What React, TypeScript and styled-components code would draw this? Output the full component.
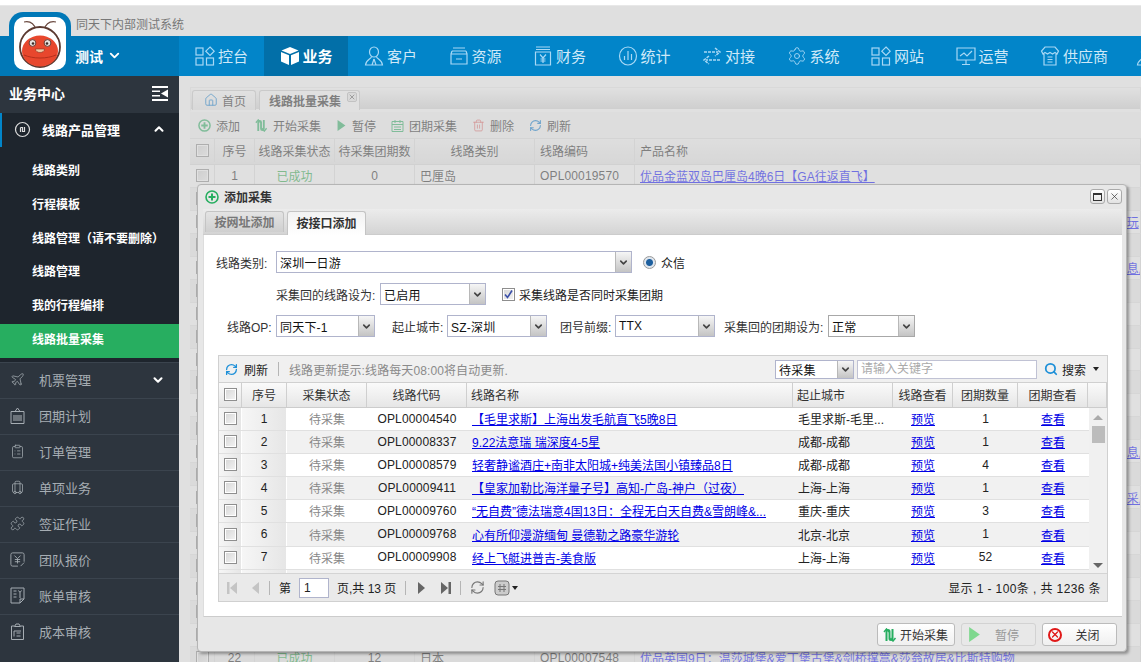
import React from 'react';
import styled, { createGlobalStyle } from 'styled-components';
import {
  ChevronDown, ChevronUp, ClipboardList, Home, Luggage, Plane, Puzzle, RefreshCw,
  Search, Settings, Trash2, X,
} from 'lucide-react';

const GlobalStyle = createGlobalStyle`
  html, body {
    margin: 0;
    padding: 0;
    overflow: hidden;
  }
  body {
    font-family: "Liberation Sans", "Noto Sans CJK SC", sans-serif;
    font-size: 12px;
    color: #222;
  }
  * {
    box-sizing: border-box;
  }
`;

const Page = styled.div`
  position: relative;
  width: 1141px;
  height: 662px;
  overflow: hidden;
  background: #fff;
  padding-top: 5px;
  display: flex;
  flex-direction: column;
`;

const TopStrip = styled.div`
  height: 31px;
  background: #dfdfdf;
  border-top: 1px solid #e8e8e8;
  padding: 11px 0 0 76px;
  line-height: 16px;
  color: #777;
  flex: none;
`;

const LogoFrame = styled.div`
  position: absolute;
  left: 9px;
  top: 12px;
  width: 62px;
  height: 64px;
  padding: 5px 5px 0;
  background: #0078b7;
  border-radius: 14px 14px 0 0;
`;

const LogoPlate = styled.div`
  width: 52px;
  height: 53px;
  background: #fff;
  border-radius: 10px;
  overflow: hidden;
`;

const NavBar = styled.nav`
  height: 40px;
  flex: none;
  display: flex;
  background: #0285c9;
  overflow: hidden;
`;

const Brand = styled.div`
  width: 179px;
  flex: none;
  background: #0078b7;
  color: #fff;
  font-size: 14px;
  font-weight: 700;
  padding: 0 0 1px 75px;
  display: flex;
  align-items: center;
  gap: 4px;
`;

const NavItem = styled.div<{ $active?: boolean; $w?: number }>`
  flex: none;
  width: ${(p) => p.$w ?? 84.5}px;
  padding: 0 0 1px 16px;
  display: flex;
  align-items: center;
  gap: 3px;
  font-size: 15px;
  color: ${(p) => (p.$active ? '#fff' : '#cfe9f8')};
  font-weight: ${(p) => (p.$active ? 700 : 400)};
  background: ${(p) => (p.$active ? '#026fa8' : 'transparent')};
  white-space: nowrap;
`;

const Body = styled.div`
  flex: 1;
  min-height: 0;
  display: flex;
`;

const Sidebar = styled.aside`
  width: 179px;
  flex: none;
  background: #2d353e;
  color: #fff;
`;

const SideTitle = styled.div`
  height: 37px;
  padding: 0 11px 3px 9px;
  display: flex;
  align-items: center;
  justify-content: space-between;
  font-size: 14px;
  font-weight: 700;
`;

const GroupHead = styled.div`
  height: 34px;
  background: #1e252d;
  border-left: 2px solid #0285c9;
  padding: 0 13px 2px 12px;
  display: flex;
  align-items: center;
  gap: 11px;
  font-size: 13px;
  font-weight: 700;
  span {
    flex: 1;
  }
`;

const SubList = styled.div`
  background: #1e252d;
  padding: 8px 0 4px;
`;

const SubItem = styled.div<{ $active?: boolean }>`
  height: 33.8px;
  line-height: 33.8px;
  padding-left: 32px;
  font-weight: 700;
  background: ${(p) => (p.$active ? '#27ae60' : 'transparent')};
`;

const SideRow = styled.div`
  height: 36px;
  padding: 0 14px 1px 10px;
  border-top: 1px solid #3b444e;
  display: flex;
  align-items: center;
  gap: 14px;
  font-size: 13px;
  color: #a6adb3;
  svg:first-child {
    flex: none;
    width: 15px;
    height: 17px;
  }
  span {
    flex: 1;
  }
`;

const Content = styled.main`
  position: relative;
  flex: 1;
  min-width: 0;
  padding: 11px 0 0 11px;
  background: #fff;
  overflow: hidden;
`;

const TabBar = styled.div`
  height: 25px;
  display: flex;
  gap: 3px;
  padding: 2px 0 0 1px;
  background: linear-gradient(#fff, #d8d8d8);
  border: 1px solid #eee;
  border-bottom: 3px solid #fff;
`;

const PageTab = styled.div<{ $active?: boolean }>`
  height: 20px;
  padding: 0 ${(p) => (p.$active ? 18 : 9)}px 1px ${(p) => (p.$active ? 9 : 11)}px;
  position: relative;
  display: flex;
  align-items: center;
  gap: 4px;
  border: 1px solid #ccc;
  border-bottom: 0;
  border-radius: 3px 3px 0 0;
  background: ${(p) => (p.$active ? '#fff' : 'linear-gradient(#fff, #eee)')};
  font-weight: ${(p) => (p.$active ? 700 : 400)};
  color: #222;
`;

const TabClose = styled.i`
  position: absolute;
  right: 2px;
  top: 1px;
  width: 10px;
  height: 10px;
  border: 1px solid #bbb;
  border-radius: 2px;
  background: #eee;
  color: #666;
  display: flex;
  align-items: center;
  justify-content: center;
`;

const PageToolbar = styled.div`
  height: 27px;
  display: flex;
  align-items: center;
  padding-left: 8px;
  gap: 15px;
  background: #f8f8f8;
  border-bottom: 1px solid #e4e4e4;
`;

const ToolButton = styled.span<{ $tone?: string }>`
  display: flex;
  align-items: center;
  gap: 5px;
  color: ${(p) => p.$tone ?? '#222'};
`;

const listCols = '25px 40px 80px 80px 120px 100px 1fr';

const ListHead = styled.div`
  height: 26px;
  padding-bottom: 2px;
  display: grid;
  grid-template-columns: ${listCols};
  background: linear-gradient(#fafafa, #eaeaea);
  border-bottom: 1px solid #ddd;
`;

const ListRow = styled.div<{ $odd?: boolean }>`
  height: 22.95px;
  display: grid;
  grid-template-columns: ${listCols};
  align-items: center;
  background: ${(p) => (p.$odd ? '#f1f1f1' : '#fff')};
  border-bottom: 1px solid #e8e8e8;
`;

const ListCell = styled.div<{ $center?: boolean; $tone?: string }>`
  height: 100%;
  min-width: 0;
  display: flex;
  align-items: center;
  justify-content: ${(p) => (p.$center ? 'center' : 'flex-start')};
  padding-left: ${(p) => (p.$center ? 0 : 5)}px;
  color: ${(p) => p.$tone ?? '#222'};
  white-space: nowrap;
  overflow: hidden;
  border-right: 1px solid #e2e2e2;
`;

const Mask = styled.div`
  position: absolute;
  inset: 0;
  background: rgba(200, 200, 200, 0.56);
`;

const Modal = styled.section`
  position: absolute;
  left: 18px;
  top: 108px;
  width: 930px;
  height: 468px;
  background: #e7e7e7;
  border: 1px solid #b5b5b5;
  border-radius: 4px;
  box-shadow: 2px 2px 3px rgba(0, 0, 0, 0.35);
  padding: 0 4px 0 5px;
  display: flex;
  flex-direction: column;
`;

const ModalTitle = styled.header`
  height: 24px;
  flex: none;
  display: flex;
  align-items: center;
  gap: 5px;
  padding: 0 0 1px 2px;
  font-weight: 700;
  color: #333;
`;

const WinButtons = styled.div`
  margin-left: auto;
  display: flex;
  gap: 2px;
`;

const WinButton = styled.button`
  width: 15px;
  height: 15px;
  padding: 0;
  border: 1px solid #aaa;
  border-radius: 3px;
  background: linear-gradient(#fff, #e2e2e2);
  color: #333;
  display: flex;
  align-items: center;
  justify-content: center;
`;

const MaxGlyph = styled.i`
  width: 9px;
  height: 8px;
  border: 1px solid #333;
  border-top-width: 2px;
`;

const ModalTabs = styled.div`
  height: 26px;
  flex: none;
  display: flex;
  align-items: flex-end;
  gap: 3px;
  padding-left: 2px;
  background: linear-gradient(#ececec, #d4d4d4);
  border-bottom: 1px solid #ccc;
`;

const ModalTab = styled.div<{ $active?: boolean }>`
  height: ${(p) => (p.$active ? 24 : 21)}px;
  margin-bottom: ${(p) => (p.$active ? -1 : 2)}px;
  width: 79px;
  padding-bottom: 2px;
  display: flex;
  align-items: center;
  justify-content: center;
  border: 1px solid #c4c4c4;
  border-bottom: 0;
  border-radius: 3px 3px 0 0;
  background: ${(p) => (p.$active ? 'linear-gradient(#f2f2f2, #fff)' : 'linear-gradient(#e4e4e4, #cfcfcf)')};
  color: ${(p) => (p.$active ? '#333' : '#777')};
  font-weight: 700;
`;

const Panel = styled.div`
  height: 382px;
  flex: none;
  background: #fff;
  border-left: 1px solid #ddd;
  border-bottom: 1px solid #ccc;
  padding-top: 16px;
`;

const FormRow = styled.div<{ $indent: number }>`
  height: 22px;
  margin-bottom: 10px;
  padding-left: ${(p) => p.$indent}px;
  display: flex;
  align-items: center;
`;

const FieldLabel = styled.label<{ $w: number; $gap?: number }>`
  width: ${(p) => p.$w}px;
  margin-left: ${(p) => p.$gap ?? 0}px;
  flex: none;
  color: #333;
  white-space: nowrap;
`;

const Combo = styled.div<{ $w: number; $plain?: boolean; $short?: boolean }>`
  width: ${(p) => p.$w}px;
  height: ${(p) => (p.$short ? 19 : 22)}px;
  flex: none;
  display: flex;
  border: 1px solid ${(p) => (p.$plain ? '#a8a8a8' : '#b0b4cc')};
  background: #fff;
`;

const ComboText = styled.span`
  flex: 1;
  padding-left: 3px;
  display: flex;
  align-items: center;
  color: #111;
  letter-spacing: 0.2px;
`;

const ComboTrigger = styled.span`
  width: 16px;
  flex: none;
  display: flex;
  align-items: center;
  justify-content: center;
  background: linear-gradient(#f6f6f6, #c4c4c4);
  border-left: 1px solid #b8b8b8;
  color: #444;
`;

const Radio = styled.i`
  width: 13px;
  height: 13px;
  margin: 0 5px 0 11px;
  border-radius: 50%;
  border: 1px solid #999;
  background: radial-gradient(circle, #1d5f9e 0 3px, #dfe6ee 4px);
`;

const CheckBox = styled.i`
  width: 13px;
  height: 13px;
  flex: none;
  display: flex;
  align-items: center;
  justify-content: center;
  border: 1px solid #8e8e8e;
  outline: 1px solid #fff;
  outline-offset: -2px;
  background: linear-gradient(135deg, #d6d6d6, #f4f4f4);
`;

const FormCheck = styled(CheckBox)`
  margin: 0 4px 0 16px;
`;

const Grid = styled.div`
  margin: 18px 0 0 14px;
  width: 890px;
  height: 247px;
  border: 1px solid #d0d0d0;
  display: flex;
  flex-direction: column;
`;

const GridBar = styled.div`
  height: 27px;
  flex: none;
  display: flex;
  align-items: center;
  padding: 0 8px 0 6px;
  background: #f0f0f0;
  border-bottom: 1px solid #d0d0d0;
`;

const RefreshLabel = styled.span`
  margin-left: 6px;
`;

const BarDivider = styled.i<{ $m?: number }>`
  width: 1px;
  height: 14px;
  margin: 0 ${(p) => p.$m ?? 9}px;
  flex: none;
  background: #b5b5b5;
`;

const Hint = styled.span`
  color: #8a8a8a;
  letter-spacing: 0.1px;
`;

const BarRight = styled.div`
  margin-left: auto;
  display: flex;
  align-items: center;
`;

const SearchInput = styled.div`
  width: 180px;
  height: 19px;
  margin: 0 7px 0 3px;
  padding-left: 3px;
  line-height: 17px;
  color: #aaa;
  background: #fff;
  border: 1px solid #c0c2d4;
`;

const SearchLabel = styled.span`
  margin: 0 7px 0 4px;
`;

const Caret = styled.i`
  width: 0;
  height: 0;
  border: 3px solid transparent;
  border-top: 4px solid #222;
  border-bottom: 0;
`;

const gridCols = '23px 45px 80px 100px 326px 100px 60px 65px 70px 19px';

const GridHead = styled.div`
  height: 25px;
  flex: none;
  padding-bottom: 0;
  display: grid;
  grid-template-columns: ${gridCols};
  background: linear-gradient(#fafafa, #e6e6e6);
  border-bottom: 1px solid #ccc;
`;

const HeadCell = styled.div<{ $left?: boolean }>`
  display: flex;
  align-items: center;
  justify-content: ${(p) => (p.$left ? 'flex-start' : 'center')};
  padding: 0 0 2px ${(p) => (p.$left ? 4 : 0)}px;
  color: #333;
  border-right: 1px solid #cfcfcf;
`;

const GridBody = styled.div`
  flex: 1;
  min-height: 0;
  display: flex;
  overflow: hidden;
`;

const Rows = styled.div`
  flex: 1;
  overflow: hidden;
`;

const GridRow = styled.div<{ $odd?: boolean }>`
  height: 23.1px;
  display: grid;
  grid-template-columns: 23px 45px 80px 100px 326px 100px 60px 65px 70px;
  background: ${(p) => (p.$odd ? '#f1f1f1' : '#fff')};
  border-bottom: 1px solid #e0e0e0;
`;

const Cell = styled.div<{ $left?: boolean; $tone?: string; $shade?: boolean }>`
  display: flex;
  align-items: center;
  justify-content: ${(p) => (p.$left ? 'flex-start' : 'center')};
  padding: 0 0 1px ${(p) => (p.$left ? 5 : 0)}px;
  color: ${(p) => p.$tone ?? '#222'};
  white-space: nowrap;
  overflow: hidden;
  background: ${(p) => (p.$shade ? 'linear-gradient(90deg, #f6f6f6, #e6e6e6)' : 'transparent')};
  border-right: ${(p) => (p.$shade ? '1px solid #fff' : '0')};
`;

const Mono = styled.span`
  letter-spacing: 0.15px;
`;

const LinkText = styled.a`
  color: #0000e6;
  text-decoration: underline;
`;

const MutedLink = styled.a`
  color: #0000ff;
  text-decoration: underline;
`;

const Scroll = styled.div`
  width: 18px;
  flex: none;
  background: #f0f0f0;
  padding: 7px 2px 5px;
  display: flex;
  flex-direction: column;
  align-items: center;
`;

const ScrollThumb = styled.i`
  width: 13px;
  height: 17px;
  margin-top: 6px;
  background: #bcbcbc;
`;

const ArrowUp = styled.i`
  width: 0;
  height: 0;
  border: 5px solid transparent;
  border-bottom: 5px solid #aaa;
  border-top: 0;
`;

const ArrowDown = styled.i`
  width: 0;
  height: 0;
  margin-top: auto;
  border: 5px solid transparent;
  border-top: 5px solid #666;
  border-bottom: 0;
`;

const Pager = styled.div`
  height: 28px;
  flex: none;
  display: flex;
  align-items: center;
  padding: 0 6px 0 8px;
  background: #eaeaea;
  border-top: 1px solid #d4d4d4;
  color: #222;
`;

const PagerIcon = styled.span<{ $gap?: number }>`
  display: flex;
  margin-left: ${(p) => p.$gap ?? 0}px;
`;

const PageInput = styled.div`
  width: 30px;
  height: 20px;
  margin: 0 8px;
  padding-left: 4px;
  line-height: 18px;
  background: #fff;
  border: 1px solid #b0b4cc;
`;

const PagerInfo = styled.span`
  margin-left: auto;
  letter-spacing: 0.4px;
`;

const ModalFoot = styled.footer`
  flex: 1;
  display: flex;
  justify-content: flex-end;
  gap: 6px;
  padding: 6px 5px 0 0;
`;

const FootButton = styled.button<{ $w: number; $off?: boolean }>`
  width: ${(p) => p.$w}px;
  height: 23px;
  padding: 0 3px 0 5px;
  display: flex;
  align-items: center;
  font: inherit;
  color: ${(p) => (p.$off ? '#999' : '#333')};
  border: 1px solid ${(p) => (p.$off ? '#d2d2d2' : '#bbb')};
  border-radius: 3px;
  background: ${(p) => (p.$off ? '#e8e8e8' : 'linear-gradient(#fff, #f0f0f0)')};
  span {
    flex: 1;
    text-align: center;
  }
`;

const CloseMark = styled.i`
  width: 14px;
  height: 14px;
  border: 2px solid #e01818;
  border-radius: 50%;
  color: #e01818;
  display: flex;
  align-items: center;
  justify-content: center;
`;

type IconProps = { size?: number; color?: string };

const Tile = ({ size = 20, color = '#a8d8f5' }: IconProps) => (
  <svg width={size} height={size} viewBox="0 0 20 20" fill="none" stroke={color} strokeWidth="1.2">
    <rect x="1" y="2" width="7" height="7" />
    <path d="M15 1l4.2 4.2L15 9.4l-4.2-4.2z" />
    <rect x="1" y="12" width="7" height="7" />
    <rect x="11.500" y="12" width="7" height="7" />
  </svg>
);

const Cube = () => (
  <svg width="20" height="20" viewBox="0 0 20 20" fill="#fff">
    <path d="M10 1l8.500 3.600L10 8 1.500 4.600z" />
    <path d="M1 6l8 3.300V19l-8-3.400zM19 6l-8 3.300V19l8-3.400z" />
  </svg>
);

const Person = () => (
  <svg width="20" height="20" viewBox="0 0 20 20" fill="none" stroke="#a8d8f5" strokeWidth="1.2">
    <ellipse cx="10" cy="6" rx="4.500" ry="5" />
    <path d="M7.500 10.500c0 2.500-5.500 3-6 8.500h17c-.5-5.500-6-6-6-8.500M10 13l-2 6M10 13l2 6" />
  </svg>
);

const Cabinet = () => (
  <svg width="20" height="20" viewBox="0 0 20 20" fill="none" stroke="#a8d8f5" strokeWidth="1.2">
    <path d="M4 2h12M3 5h14M2 8h16v10H2zM2 8l1-3M18 8l-1-3M7 13h6" />
  </svg>
);

const Jar = () => (
  <svg width="20" height="20" viewBox="0 0 20 20" fill="none" stroke="#a8d8f5" strokeWidth="1.2">
    <path d="M3 1h14M3 3.500h14M2.500 6h15v13h-15zM7 8.500l3 3.500 3-3.500M10 12v5M7.500 13h5M7.500 15h5" />
  </svg>
);

const Stats = () => (
  <svg width="20" height="20" viewBox="0 0 20 20" fill="none" stroke="#a8d8f5" strokeWidth="1.2">
    <ellipse cx="10" cy="10" rx="8.500" ry="9" />
    <path d="M6.500 14v-4M10 14V5M13.500 14V8" />
  </svg>
);

const Swap = () => (
  <svg width="20" height="20" viewBox="0 0 20 20" fill="none" stroke="#a8d8f5" strokeWidth="1.5" strokeDasharray="3 1">
    <path d="M2 6h14M13 2l5 4-5 4M18 14H4M7 10l-5 4 5 4" />
  </svg>
);

const Monitor = () => (
  <svg width="20" height="20" viewBox="0 0 20 20" fill="none" stroke="#a8d8f5" strokeWidth="1.2">
    <path d="M1 2h18v12H1zM10 14v4M6 18.500h8M4 10l4-3 3 3 5-5" />
  </svg>
);

const Shop = () => (
  <svg width="20" height="20" viewBox="0 0 20 20" fill="none" stroke="#a8d8f5" strokeWidth="1.2">
    <path d="M5 1h10l3.500 4-1.500 3-2-1.500-2.500 1.500L10 6.500 7.500 8 5 6.500 3 8 1.500 5zM4 8v11h12V8M7.500 11h5M7.500 13.500h5M7.500 16h5" />
  </svg>
);

const Collect = ({ size = 13, color = '#27ae60' }: IconProps) => (
  <svg width={size} height={size} viewBox="0 0 14 14" fill="none" stroke={color} strokeWidth="2">
    <path d="M3.500 13V3.500a1.500 1.500 0 0 1 3 0v7a1.500 1.500 0 0 0 3 0V1" />
    <path d="M1 4l2.500-3L6 4M7.500 10l2.500 3 2.500-3" strokeWidth="1.500" />
  </svg>
);

const PlusRound = ({ size = 13 }: IconProps) => (
  <svg width={size} height={size} viewBox="0 0 14 14" fill="none" stroke="#27ae60" strokeWidth="1.600">
    <circle cx="7" cy="7" r="6" />
    <path d="M7 3.500v7M3.500 7h7" strokeWidth="2" />
  </svg>
);

const PlayMark = ({ size = 13, color = '#27ae60' }: IconProps) => (
  <svg width={size} height={size} viewBox="0 0 12 14" fill={color}>
    <path d="M1 0l10 7-10 7z" />
  </svg>
);

const Calendar = () => (
  <svg width="13" height="13" viewBox="0 0 13 13" fill="none" stroke="#27ae60">
    <path d="M1 2.500h11v10H1zM1 5.500h11M4 1v3M9 1v3M3 8h7M3 10.500h7" />
  </svg>
);

const Coin = () => (
  <svg width="17" height="17" viewBox="0 0 17 17" fill="none" stroke="#ddd" strokeWidth="1.200">
    <circle cx="8.500" cy="8.500" r="7" />
    <path d="M6.500 11V6.500M6.500 6.500h2v4h2V6" />
  </svg>
);

const Fold = () => (
  <svg width="16" height="15" viewBox="0 0 16 15" fill="#fff">
    <path d="M0 0h16v2H0zM0 13h16v2H0zM0 4.500h8v1.500H0zM0 9h8v1.500H0zM16 3.500v8L9 7.500z" />
  </svg>
);

const Dated = () => (
  <svg width="15" height="17" viewBox="0 0 15 17" fill="none" stroke="#a6adb3">
    <path d="M1 4.500h13v12H1zM5 4.500L7.500 1 10 4.500" />
    <rect x="3" y="8" width="9" height="6" fill="#6d747b" stroke="none" />
  </svg>
);

const Quote = () => (
  <svg width="17" height="17" viewBox="0 0 17 17" fill="none" stroke="#a6adb3">
    <path d="M9 16H3a2 2 0 0 1-2-2V3a2 2 0 0 1 2-2h11a2 2 0 0 1 2 2v8M5 4l3.500 3.500L12 4M8.500 7.500V13M5.500 8.500h6M5.500 11h6M12 16l4-4" />
  </svg>
);

const Bill = () => (
  <svg width="15" height="17" viewBox="0 0 15 17" fill="none" stroke="#a6adb3">
    <path d="M1 1h13v11l-4 4H1zM3.500 4h3M3.500 7h3M3.500 10h3M8.500 3.500l1.500 2 1.500-2M10 5.500V11M10 16v-4h4" />
  </svg>
);

const Cost = () => (
  <svg width="15" height="17" viewBox="0 0 15 17" fill="none" stroke="#a6adb3">
    <path d="M4.500 3H1.500v13.500h12V3h-3M4.500 3.500L6 1h3l1.500 2.500zM4 8h7M4 8v5.500M6.500 10h4M6.500 13h4" />
  </svg>
);

const Bug = () => (
  <svg width="52" height="53" viewBox="0 0 52 53">
    <path d="M22 13C20 6 15 4 10 5M30 13c2-7 7-9 12-8" fill="none" stroke="#6b4a40" strokeWidth="1.200" />
    <circle cx="26" cy="30" r="20" fill="#fff" stroke="#5b3a31" strokeWidth="1.800" />
    <ellipse cx="26" cy="34" rx="18" ry="15.500" fill="#e8472d" />
    <path d="M10 38c9 4 23 4 32 0" fill="none" stroke="#b5311d" strokeWidth="1" />
    <circle cx="18.500" cy="26" r="3.400" fill="#e8e3e0" stroke="#6b3a31" />
    <circle cx="33.500" cy="26" r="3.400" fill="#e8e3e0" stroke="#6b3a31" />
    <circle cx="19" cy="26.500" r="1.300" fill="#3a2a26" />
    <circle cx="33" cy="26.500" r="1.300" fill="#3a2a26" />
    <path d="M21.500 32h9c0 2.500-2.500 3.500-4.500 3.500s-4.500-1-4.500-3.500z" fill="#f3c9a5" stroke="#7d3024" strokeWidth=".6" />
  </svg>
);

const Triangle = ({ dir, bar, color }: { dir: 'l' | 'r'; bar?: boolean; color: string }) => (
  <svg width="11" height="14" viewBox="0 0 11 14" fill={color}>
    {dir === 'l' ? <path d="M10 1v12L3 7z" /> : <path d="M1 1v12l7-6z" />}
    {bar && <rect x={dir === 'l' ? 0 : 8.5} y="1" width="2.500" height="12" />}
  </svg>
);

const navItems = [
  { label: '控台', icon: <Tile /> },
  { label: '业务', icon: <Cube />, active: true },
  { label: '客户', icon: <Person /> },
  { label: '资源', icon: <Cabinet /> },
  { label: '财务', icon: <Jar /> },
  { label: '统计', icon: <Stats /> },
  { label: '对接', icon: <Swap /> },
  { label: '系统', icon: <Settings size={20} strokeWidth={1.1} color="#a8d8f5" /> },
  { label: '网站', icon: <Tile /> },
  { label: '运营', icon: <Monitor /> },
  { label: '供应商', icon: <Shop />, w: 96 },
  { label: '', icon: <Person /> },
];

const subItems = ['线路类别', '行程模板', '线路管理（请不要删除）', '线路管理', '我的行程编排', '线路批量采集'];

const sideRows = [
  { label: '机票管理', icon: <Plane size={17} strokeWidth={1.2} color="#a6adb3" />, more: true },
  { label: '团期计划', icon: <Dated /> },
  { label: '订单管理', icon: <ClipboardList size={16} strokeWidth={1.2} color="#a6adb3" /> },
  { label: '单项业务', icon: <Luggage size={16} strokeWidth={1.2} color="#a6adb3" /> },
  { label: '签证作业', icon: <Puzzle size={16} strokeWidth={1.2} color="#a6adb3" /> },
  { label: '团队报价', icon: <Quote /> },
  { label: '账单审核', icon: <Bill /> },
  { label: '成本审核', icon: <Cost /> },
];

const routeRows = [
  { code: 'OPL00004540', name: '【毛里求斯】上海出发毛航直飞5晚8日', city: '毛里求斯-毛里...', tours: '1' },
  { code: 'OPL00008337', name: '9.22法意瑞 瑞深度4-5星', city: '成都-成都', tours: '1' },
  { code: 'OPL00008579', name: '轻奢静谧酒庄+南非太阳城+纯美法国小镇臻品8日', city: '成都-成都', tours: '4' },
  { code: 'OPL00009411', name: '【皇家加勒比海洋量子号】高知-广岛-神户（过夜）', city: '上海-上海', tours: '1' },
  { code: 'OPL00009760', name: '“无自费”德法瑞意4国13日：全程无白天自费&雪朗峰&...', city: '重庆-重庆', tours: '3' },
  { code: 'OPL00009768', name: '心有所仰漫游缅甸 曼德勒之路豪华游轮', city: '北京-北京', tours: '1' },
  { code: 'OPL00009908', name: '经上飞艇进普吉-美食版', city: '上海-上海', tours: '52' },
  { code: '', name: '', city: '', tours: '' },
];

const longTrip = '优品欧洲多国连线十五日经典之旅全程四星酒店含餐含门票含领队小费含签证全程导游讲解9';

// the list behind the dialog: only its edges show
const listRows = Array.from({ length: 22 }, (_, i) => {
  const no = i + 1;
  let name = '';
  if (no === 1) name = '优品金蓝双岛巴厘岛4晚6日【GA往返直飞】';
  if (no === 3) name = `${longTrip}玩 `;
  if (no === 5 || no === 13) name = `${longTrip}息房`;
  if (no === 15) name = `${longTrip}采度`;
  if (no === 22) name = '优品英国9日：温莎城堡&爱丁堡古堡&剑桥撑篙&莎翁故居&比斯特购物';
  return {
    no,
    wait: no === 22 ? '12' : '0',
    kind: no === 22 ? '日本' : '巴厘岛',
    code: no === 22 ? 'OPL00007548' : 'OPL00019570',
    name,
  };
});

const Arrow = () => (
  <ComboTrigger>
    <ChevronDown size={11} strokeWidth={3.5} />
  </ComboTrigger>
);

function App() {
  return (
    <>
      <GlobalStyle />
      <Page>
        <TopStrip>同天下内部测试系统</TopStrip>
        <LogoFrame>
          <LogoPlate>
            <Bug />
          </LogoPlate>
        </LogoFrame>
        <NavBar>
          <Brand>
            测试 <ChevronDown size={15} strokeWidth={3} />
          </Brand>
          {navItems.map((item, i) => (
            <NavItem key={i} $active={item.active} $w={item.w}>
              {item.icon}
              {item.label}
            </NavItem>
          ))}
        </NavBar>
        <Body>
          <Sidebar>
            <SideTitle>
              业务中心 <Fold />
            </SideTitle>
            <GroupHead>
              <Coin />
              <span>线路产品管理</span>
              <ChevronUp size={14} strokeWidth={3.5} />
            </GroupHead>
            <SubList>
              {subItems.map((label, i) => (
                <SubItem key={label + i} $active={i === subItems.length - 1}>
                  {label}
                </SubItem>
              ))}
            </SubList>
            {sideRows.map((row) => (
              <SideRow key={row.label}>
                {row.icon}
                <span>{row.label}</span>
                {row.more && <ChevronDown size={14} strokeWidth={3.5} color="#fff" />}
              </SideRow>
            ))}
          </Sidebar>
          <Content>
            <TabBar>
              <PageTab>
                <Home size={14} color="#0077d0" strokeWidth={1.6} /> 首页
              </PageTab>
              <PageTab $active>
                线路批量采集
                <TabClose>
                  <X size={8} strokeWidth={3} />
                </TabClose>
              </PageTab>
            </TabBar>
            <PageToolbar>
              <ToolButton>
                <PlusRound /> 添加
              </ToolButton>
              <ToolButton>
                <Collect /> 开始采集
              </ToolButton>
              <ToolButton>
                <PlayMark size={11} /> 暂停
              </ToolButton>
              <ToolButton>
                <Calendar /> 团期采集
              </ToolButton>
              <ToolButton>
                <Trash2 size={13} color="#e05050" strokeWidth={1.4} /> 删除
              </ToolButton>
              <ToolButton>
                <RefreshCw size={13} color="#0077d0" strokeWidth={2} /> 刷新
              </ToolButton>
            </PageToolbar>
            <ListHead>
              <ListCell $center>
                <CheckBox />
              </ListCell>
              <ListCell $center>序号</ListCell>
              <ListCell $center>线路采集状态</ListCell>
              <ListCell $center>待采集团期数</ListCell>
              <ListCell $center>线路类别</ListCell>
              <ListCell>线路编码</ListCell>
              <ListCell>产品名称</ListCell>
            </ListHead>
            {listRows.map((row, i) => (
              <ListRow key={row.no} $odd={i % 2 === 1}>
                <ListCell $center>
                  <CheckBox />
                </ListCell>
                <ListCell $center>{row.no}</ListCell>
                <ListCell $center $tone="#27a845">
                  已成功
                </ListCell>
                <ListCell $center>{row.wait}</ListCell>
                <ListCell>{row.kind}</ListCell>
                <ListCell>
                  <Mono>{row.code}</Mono>
                </ListCell>
                <ListCell>
                  <MutedLink>{row.name}</MutedLink>
                </ListCell>
              </ListRow>
            ))}
            <Mask />
            <Modal>
              <ModalTitle>
                <PlusRound size={14} />
                添加采集
                <WinButtons>
                  <WinButton>
                    <MaxGlyph />
                  </WinButton>
                  <WinButton>
                    <X size={11} strokeWidth={1.5} />
                  </WinButton>
                </WinButtons>
              </ModalTitle>
              <ModalTabs>
                <ModalTab>按网址添加</ModalTab>
                <ModalTab $active>按接口添加</ModalTab>
              </ModalTabs>
              <Panel>
                <FormRow $indent={12}>
                  <FieldLabel $w={60}>线路类别:</FieldLabel>
                  <Combo $w={356}>
                    <ComboText>深圳一日游</ComboText>
                    <Arrow />
                  </Combo>
                  <Radio />
                  众信
                </FormRow>
                <FormRow $indent={72}>
                  <FieldLabel $w={104}>采集回的线路设为:</FieldLabel>
                  <Combo $w={106}>
                    <ComboText>已启用</ComboText>
                    <Arrow />
                  </Combo>
                  <FormCheck>
                    <svg width="11" height="11" viewBox="0 0 11 11" fill="none" stroke="#3a4fa8" strokeWidth="1.600">
                      <path d="M2 5.500l2.500 3L9 1.500" />
                    </svg>
                  </FormCheck>
                  采集线路是否同时采集团期
                </FormRow>
                <FormRow $indent={23}>
                  <FieldLabel $w={49}>线路OP:</FieldLabel>
                  <Combo $w={99}>
                    <ComboText>同天下-1</ComboText>
                    <Arrow />
                  </Combo>
                  <FieldLabel $w={55} $gap={17}>
                    起止城市:
                  </FieldLabel>
                  <Combo $w={100}>
                    <ComboText>SZ-深圳</ComboText>
                    <Arrow />
                  </Combo>
                  <FieldLabel $w={55} $gap={13}>
                    团号前缀:
                  </FieldLabel>
                  <Combo $w={100}>
                    <ComboText>TTX</ComboText>
                    <Arrow />
                  </Combo>
                  <FieldLabel $w={104} $gap={9}>
                    采集回的团期设为:
                  </FieldLabel>
                  <Combo $w={87} $plain>
                    <ComboText>正常</ComboText>
                    <Arrow />
                  </Combo>
                </FormRow>
                <Grid>
                  <GridBar>
                    <RefreshCw size={13} color="#1e90d8" strokeWidth={2.4} />
                    <RefreshLabel>刷新</RefreshLabel>
                    <BarDivider $m={10} />
                    <Hint>线路更新提示:线路每天08:00将自动更新.</Hint>
                    <BarRight>
                      <Combo $w={79} $short>
                        <ComboText>待采集</ComboText>
                        <Arrow />
                      </Combo>
                      <SearchInput>请输入关键字</SearchInput>
                      <Search size={14} color="#1e90d8" strokeWidth={3} />
                      <SearchLabel>搜索</SearchLabel>
                      <Caret />
                    </BarRight>
                  </GridBar>
                  <GridHead>
                    <HeadCell>
                      <CheckBox />
                    </HeadCell>
                    <HeadCell>序号</HeadCell>
                    <HeadCell>采集状态</HeadCell>
                    <HeadCell>线路代码</HeadCell>
                    <HeadCell $left>线路名称</HeadCell>
                    <HeadCell $left>起止城市</HeadCell>
                    <HeadCell>线路查看</HeadCell>
                    <HeadCell>团期数量</HeadCell>
                    <HeadCell>团期查看</HeadCell>
                    <HeadCell />
                  </GridHead>
                  <GridBody>
                    <Rows>
                      {routeRows.map((row, i) => (
                        <GridRow key={i} $odd={i % 2 === 1}>
                          <Cell $shade>
                            <CheckBox />
                          </Cell>
                          <Cell $shade>{row.code ? i + 1 : ''}</Cell>
                          <Cell $tone="#888">{row.code && '待采集'}</Cell>
                          <Cell>
                            <Mono>{row.code}</Mono>
                          </Cell>
                          <Cell $left>
                            <LinkText>{row.name}</LinkText>
                          </Cell>
                          <Cell $left>{row.city}</Cell>
                          <Cell>
                            <LinkText>{row.code && '预览'}</LinkText>
                          </Cell>
                          <Cell>{row.tours}</Cell>
                          <Cell>
                            <LinkText>{row.code && '查看'}</LinkText>
                          </Cell>
                        </GridRow>
                      ))}
                    </Rows>
                    <Scroll>
                      <ArrowUp />
                      <ScrollThumb />
                      <ArrowDown />
                    </Scroll>
                  </GridBody>
                  <Pager>
                    <PagerIcon>
                      <Triangle dir="l" bar color="#c4c4c4" />
                    </PagerIcon>
                    <PagerIcon $gap={11}>
                      <Triangle dir="l" color="#c4c4c4" />
                    </PagerIcon>
                    <BarDivider />
                    第
                    <PageInput>1</PageInput>
                    页,共 13 页
                    <BarDivider />
                    <PagerIcon $gap={2}>
                      <Triangle dir="r" color="#666" />
                    </PagerIcon>
                    <PagerIcon $gap={12}>
                      <Triangle dir="r" bar color="#666" />
                    </PagerIcon>
                    <BarDivider />
                    <PagerIcon>
                      <RefreshCw size={15} color="#777" strokeWidth={1.8} />
                    </PagerIcon>
                    <PagerIcon $gap={9}>
                      <svg width="16" height="16" viewBox="0 0 16 16" fill="#ccc" stroke="#777">
                        <rect x="1" y="1" width="14" height="14" rx="3" />
                        <path d="M6 4v8M10 4v8M4 6.500h8M4 9.500h8" fill="none" />
                      </svg>
                    </PagerIcon>
                    <PagerIcon $gap={2}>
                      <Caret />
                    </PagerIcon>
                    <PagerInfo>显示 1 - 100条 , 共 1236 条</PagerInfo>
                  </Pager>
                </Grid>
              </Panel>
              <ModalFoot>
                <FootButton $w={78}>
                  <Collect size={14} />
                  <span>开始采集</span>
                </FootButton>
                <FootButton $w={75} $off>
                  <PlayMark size={15} color="#7fd88f" />
                  <span>暂停</span>
                </FootButton>
                <FootButton $w={75}>
                  <CloseMark>
                    <X size={11} strokeWidth={3} />
                  </CloseMark>
                  <span>关闭</span>
                </FootButton>
              </ModalFoot>
            </Modal>
          </Content>
        </Body>
      </Page>
    </>
  );
}

export default App;
